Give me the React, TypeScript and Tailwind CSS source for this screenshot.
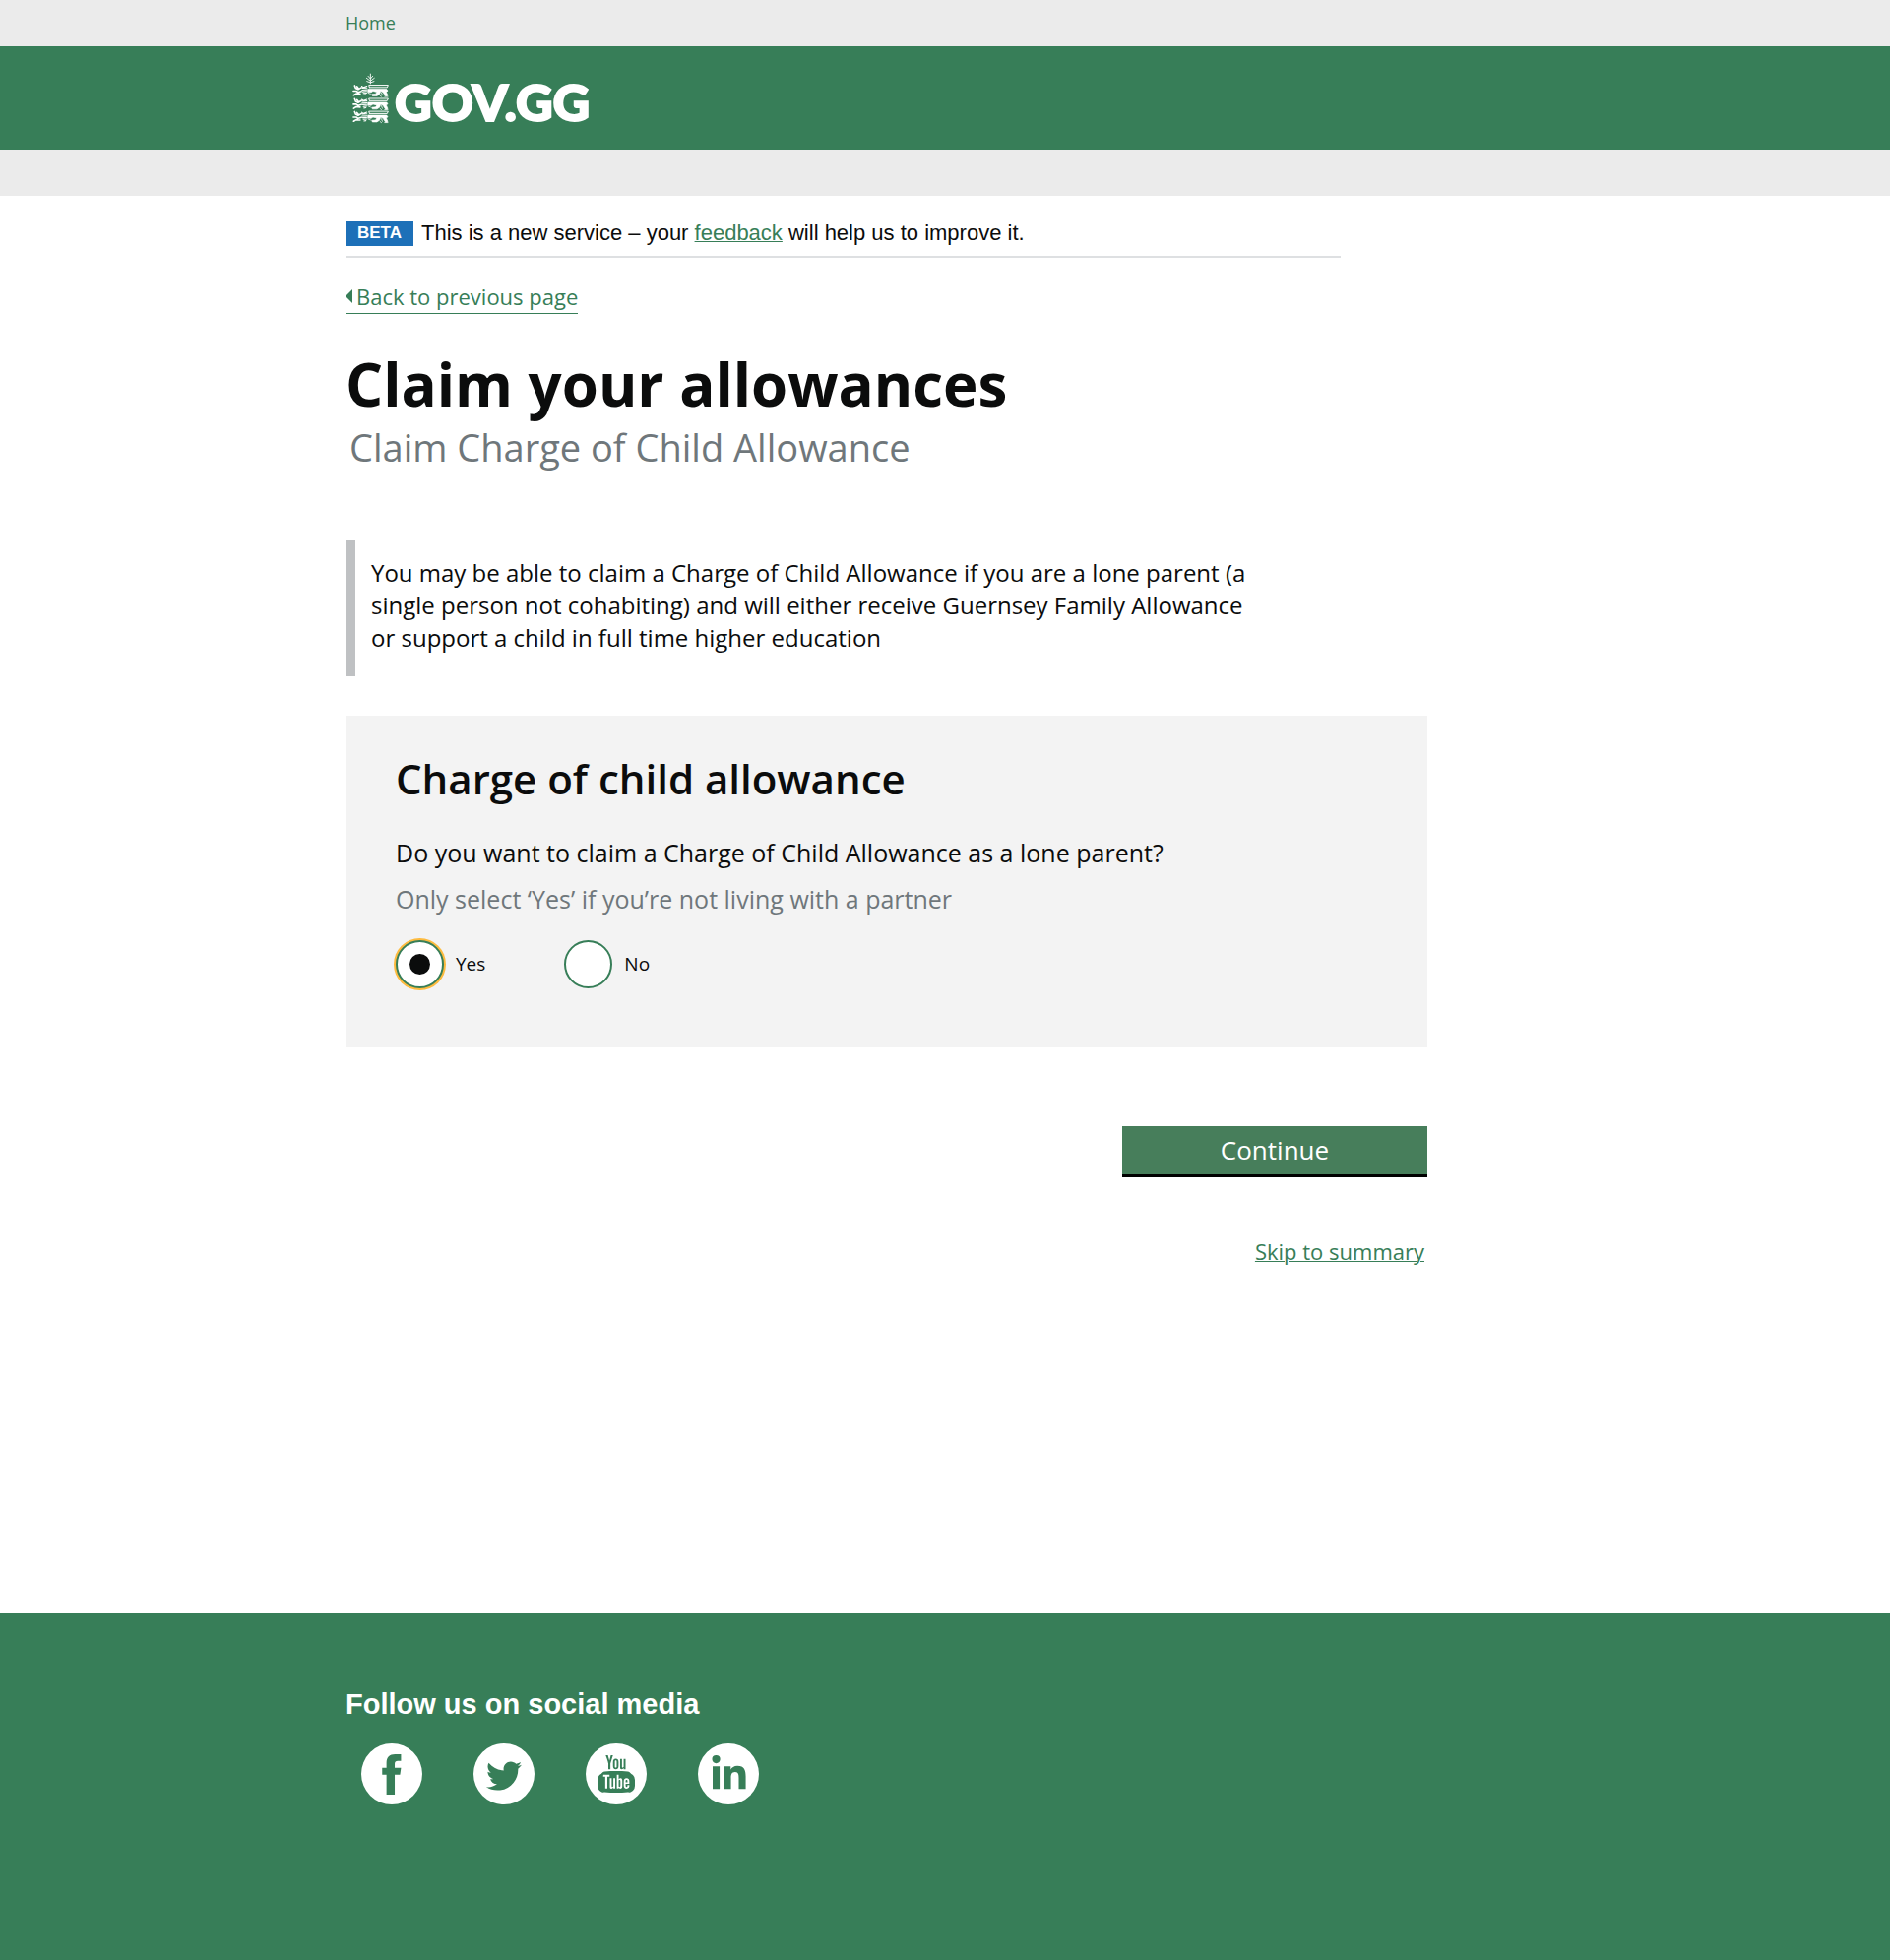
import { useState } from 'react';
import { FaLinkedinIn, FaTwitter } from 'react-icons/fa';
import { TfiYoutube } from 'react-icons/tfi';

function Lion({ y }: { y: number }) {
  return (
    <g transform={`translate(0 ${y})`} fill="none" stroke="currentColor" strokeLinecap="round" strokeLinejoin="round">
      <path strokeWidth="5" d="M7 3 L10 11 L18 15 L28 9 M3 20 L12 20 L18 24 L28 21 M4 33 L12 28 L24 29 M14 6 L19 12" />
      <path strokeWidth="3.4" d="M29 5 L34 9 L45 5 M31 11 L45 10 M30 17 L45 16 M32 22 L44 21 M34 27 L44 26 M36 32 L42 31" />
      <path strokeWidth="3" d="M53 9 L51 2 H111 L108 9 H54" />
      <path strokeWidth="2" fill="currentColor" d="M49 14 H106 L110 19 L105 23 L110 34 L103 36 L95 24 L88 20 L84 30 L76 35 L62 35 L60 30 L72 29 L76 23 L64 20 L58 24 L48 23 Z" />
      <path strokeWidth="2.4" d="M49 26 L56 29 M90 25 L93 33 M100 37 H110 M86 34 L90 37" />
    </g>
  );
}

function Crest() {
  return (
    <svg viewBox="0 0 116 156" className="h-[52px] w-[38px] shrink-0" aria-hidden="true">
      <g fill="none" stroke="currentColor" strokeWidth="2.8" strokeLinecap="round">
        <path d="M56 2 V32 M49 9 L56 17 L63 9 M44 15 L56 24 L68 15 M45 25 L56 29 L67 25" />
      </g>
      <Lion y={35} />
      <Lion y={76} />
      <Lion y={116} />
    </svg>
  );
}

function FacebookMark() {
  return (
    <svg viewBox="0 0 58 122" className="h-[41px] w-5" fill="currentColor" aria-hidden="true">
      <path d="M57 0v20H47c-6 0-9 3-9 9v12h19l-3 21H38v60H13V62H0V41h13V26C13 9 22 0 39 0z" />
    </svg>
  );
}

function YouTubeMark() {
  return (
    <span className="relative grid place-items-center">
      <TfiYoutube className="size-[38px]" />
      <span className="absolute bottom-0 h-5 w-[38px] rounded-[7px] border-x-5 border-[#377e58]" />
    </span>
  );
}

function Choice({ label, checked, onSelect }: { label: string; checked: boolean; onSelect: () => void }) {
  return (
    <label className="flex cursor-pointer items-center gap-3 text-[19px]">
      <input
        type="radio"
        name="claim-allowance"
        checked={checked}
        onChange={onSelect}
        className="grid size-[49px] appearance-none place-items-center rounded-full border-2 border-[#377e58] bg-white outline-none before:size-[21px] before:rounded-full checked:ring-2 checked:ring-[#fdbb3f] checked:before:bg-[#0b0c0c]"
      />
      {label}
    </label>
  );
}

const social = [
  { name: 'Facebook', icon: <FacebookMark /> },
  { name: 'Twitter', icon: <FaTwitter className="mt-1 size-9" /> },
  { name: 'YouTube', icon: <YouTubeMark /> },
  { name: 'LinkedIn', icon: <FaLinkedinIn className="size-[39px]" /> },
];

const wrap = 'mx-auto w-full max-w-[1218px]';

export default function App() {
  const [claim, setClaim] = useState('yes');
  return (
    <div className="flex min-h-screen flex-col bg-white font-['Open_Sans',sans-serif] text-[#0b0c0c]">
      <nav className="bg-[#ebebeb]">
        <div className={wrap}>
          <a href="#" className="block h-[47px] w-fit text-lg leading-[47px] text-[#377e58]">Home</a>
        </div>
      </nav>
      <header className="bg-[#377e58] text-white">
        <div className={wrap}>
          <a href="#" className="flex h-[105px] w-fit items-center gap-[5px] pl-[7px]">
            <Crest />
            <span className="pt-1.5 font-['Lato',sans-serif] text-[52px] font-black leading-none [-webkit-text-stroke:2px_white]">GOV.GG</span>
          </a>
        </div>
      </header>
      <div className="h-[47px] bg-[#ebebeb]" />

      <main className="grow">
        <div className={wrap}>
          <div className="max-w-[1099px]">
            <div className="mr-22 mt-[25px] flex items-center gap-2 border-b-2 border-[#dee0e2] pb-2.5 font-['Liberation_Sans',sans-serif]">
              <strong className="bg-[#1d70b8] px-3 text-[17px] leading-[26px] text-white">BETA</strong>
              <p className="text-[22px] leading-[26px]">
                This is a new service – your <a href="#" className="text-[#377e58] underline decoration-1">feedback</a> will help us to improve it.
              </p>
            </div>
            <a href="#" className="mt-[23px] flex w-fit items-center gap-1 border-b border-[#377e58] pb-px text-[22px] leading-8 text-[#377e58]">
              <svg viewBox="0 0 7 14" className="h-3.5 w-[7px]" fill="currentColor" aria-hidden="true"><path d="M7 0v14L0 7z" /></svg>
              Back to previous page
            </a>
            <h1 className="mt-[33px] text-[60px] font-bold leading-[76px]">Claim your allowances</h1>
            <p className="pl-1 text-[38px] leading-[52px] text-[#6f777b]">Claim Charge of Child Allowance</p>
            <p className="mt-[69px] max-w-[940px] border-l-10 border-[#bfc1c3] pb-[23px] pl-4 pt-4 text-2xl leading-[33px]">
              You may be able to claim a Charge of Child Allowance if you are a lone parent (a single person not cohabiting) and will either receive Guernsey Family Allowance or support a child in full time higher education
            </p>
            <section className="mt-10 bg-[#f3f3f3] px-[51px] pb-[60px] pt-[35px]">
              <h2 className="text-[42px] font-semibold leading-[58px]">Charge of child allowance</h2>
              <fieldset className="mt-[30px]">
                <legend className="text-[25px] leading-8">Do you want to claim a Charge of Child Allowance as a lone parent?</legend>
                <p className="mt-[15px] text-[25px] leading-8 text-[#6f777b]">Only select ‘Yes’ if you’re not living with a partner</p>
                <div className="mt-[26px] flex gap-20">
                  <Choice label="Yes" checked={claim === 'yes'} onSelect={() => setClaim('yes')} />
                  <Choice label="No" checked={claim === 'no'} onSelect={() => setClaim('no')} />
                </div>
              </fieldset>
            </section>
            <div className="mt-20 flex flex-col items-end gap-[59px]">
              <button type="button" className="w-[310px] border-b-3 border-black bg-[#477e5b] text-[26px] leading-[49px] text-white">Continue</button>
              <a href="#" className="mr-[3px] text-[22px] leading-8 text-[#377e58] underline decoration-1">Skip to summary</a>
            </div>
          </div>
        </div>
      </main>

      <footer className="h-[352px] bg-[#377e58] pt-[74px] text-white">
        <div className={wrap}>
          <h2 className="font-['Liberation_Sans',sans-serif] text-[29px] font-bold leading-9">Follow us on social media</h2>
          <ul className="mt-[22px] flex gap-[52px] pl-4">
            {social.map((s) => (
              <li key={s.name}>
                <a href="#" aria-label={s.name} className="grid size-[62px] place-items-center rounded-full bg-white text-[#377e58]">{s.icon}</a>
              </li>
            ))}
          </ul>
        </div>
      </footer>
    </div>
  );
}
